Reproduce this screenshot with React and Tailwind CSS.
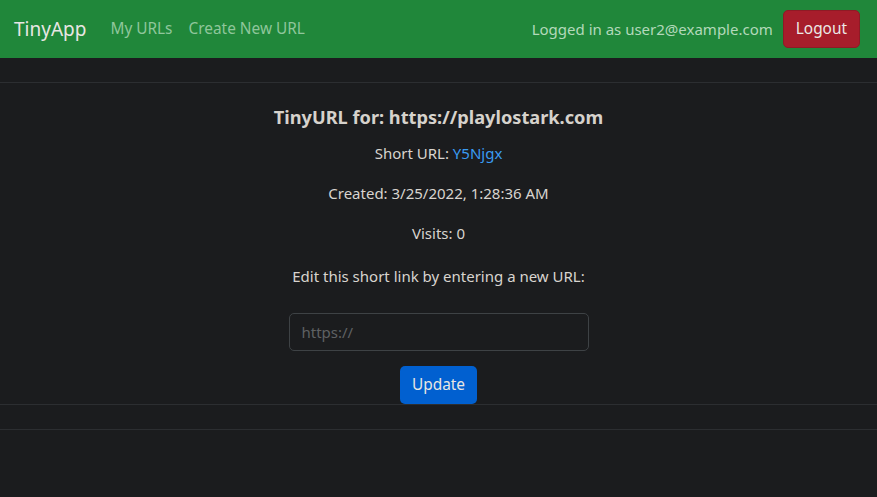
import React from 'react';

const App = () => {
  return (
    <div className="min-h-screen bg-[#1b1c1e] text-[#d8d4cf]" style={{ fontFamily: '"Noto Sans", "Open Sans", sans-serif' }}>
      {/* Navbar */}
      <nav className="h-[58px] bg-[#20873a] flex items-center justify-between px-[14px]">
        <div className="flex items-center">
          <span className="text-[19px] text-[#e8e6e3] mr-[24px]">TinyApp</span>
          <a className="text-[15.4px] text-[#8fc69b] mr-[16px]">My URLs</a>
          <a className="text-[15.4px] text-[#8fc69b]">Create New URL</a>
        </div>
        <div className="flex items-center">
          <span className="text-[15px] text-[#b3d9ba] mr-[10px]">Logged in as user2@example.com</span>
          <button className="h-[38px] px-[12px] rounded-[5px] bg-[#a71d2b] border border-[#8f1a25] text-[15.4px] text-[#ece9e6] mr-[3px]">
            Logout
          </button>
        </div>
      </nav>

      {/* Card */}
      <div className="border-b border-[#2c2e31]">
        <div className="h-[25px] border-b border-[#2c2e31]"></div>
        <div className="flex flex-col items-center pt-[22px] text-center">
          <h5 className="text-[18.2px] leading-[24px] font-bold text-[#d6d2cc] mb-[12px]">TinyURL for: https://playlostark.com</h5>
          <p className="text-[15px] leading-[24px] mb-[16px]">
            Short URL: <a className="text-[#3a9bf2]">Y5Njgx</a>
          </p>
          <p className="text-[15px] leading-[24px] mb-[16px]">Created: 3/25/2022, 1:28:36 AM</p>
          <p className="text-[15px] leading-[24px] mb-[19px]">Visits: 0</p>
          <p className="text-[15px] leading-[24px] mb-[25px]">Edit this short link by entering a new URL:</p>
          <input
            type="text"
            placeholder="https://"
            className="w-[300px] h-[38px] px-[12px] rounded-[5px] bg-[#1b1c1e] border border-[#3e4245] text-[15px] placeholder:text-[#5f6163] outline-none mb-[15px]"
          />
          <button className="h-[38px] px-[12px] rounded-[5px] bg-[#0160d0] text-[15.4px] text-[#e8e6e3]">Update</button>
        </div>
        <div className="h-[25px] border-t border-[#2c2e31]"></div>
      </div>
    </div>
  );
};

export default App;
